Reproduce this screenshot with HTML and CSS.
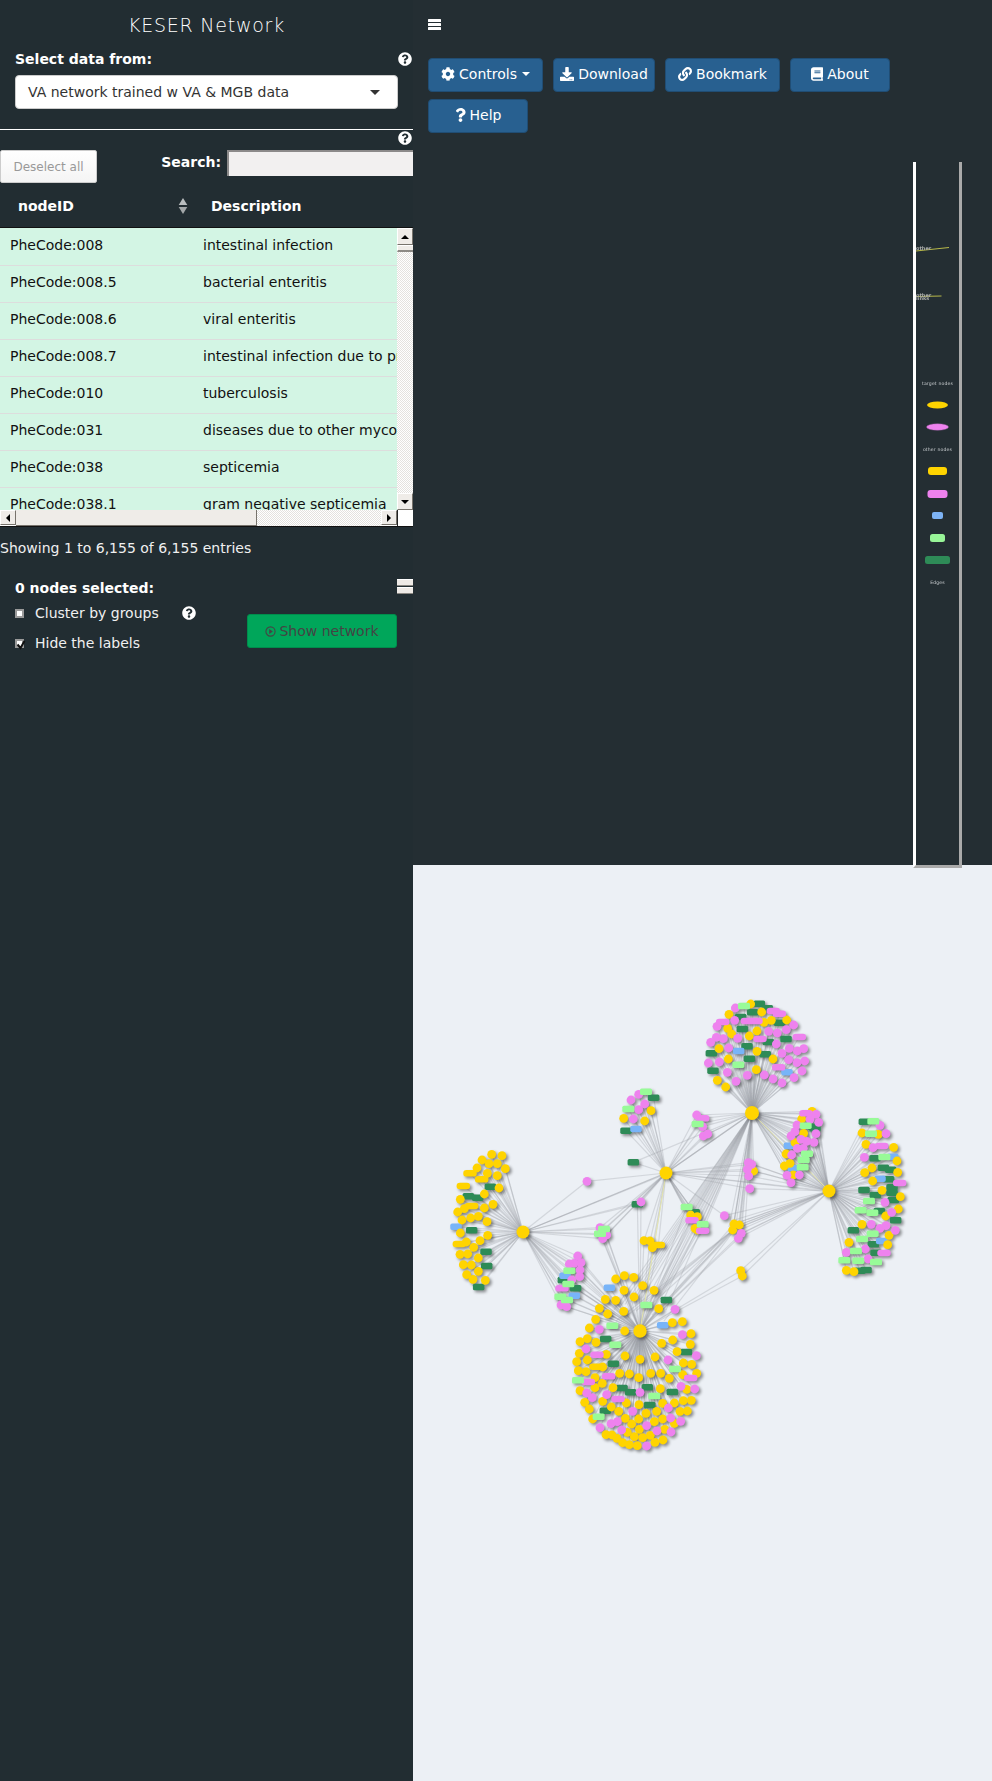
FILE: index.html
```html
<!DOCTYPE html>
<html lang="en">
<head>
<meta charset="utf-8">
<title>KESER Network</title>
<link rel="stylesheet" href="styles.css">
</head>
<body>
<svg class="defs" width="0" height="0" aria-hidden="true">
  <symbol id="i-help" viewBox="0 0 512 512"><path d="M504 256c0 136.997-111.043 248-248 248S8 392.997 8 256C8 119.083 119.043 8 256 8s248 111.083 248 248zM262.655 90c-54.497 0-89.255 22.957-116.549 63.758-3.536 5.286-2.353 12.415 2.715 16.258l34.699 26.31c5.205 3.947 12.621 3.008 16.665-2.122 17.864-22.658 30.113-35.797 57.303-35.797 20.429 0 45.698 13.148 45.698 32.958 0 14.976-12.363 22.667-32.534 33.976C247.128 238.528 216 254.941 216 296v4c0 6.627 5.373 12 12 12h56c6.627 0 12-5.373 12-12v-1.333c0-28.462 83.186-29.647 83.186-106.667 0-58.002-60.165-102-116.531-102zM256 338c-25.365 0-46 20.635-46 46 0 25.364 20.635 46 46 46s46-20.636 46-46c0-25.365-20.635-46-46-46z"/></symbol>
</svg>
<div class="app">
  <aside class="sidebar">
    <h1 class="brand">KESER Network</h1>
    <div class="field-head">
      <label class="label">Select data from:</label>
      <svg class="help"><use href="#i-help"/></svg>
    </div>
    <div class="select">
      <span>VA network trained w VA &amp; MGB data</span>
      <i class="caret"></i>
    </div>
    <hr class="rule">
    <div class="help-row"><svg class="help"><use href="#i-help"/></svg></div>
    <div class="table-tools">
      <button class="deselect">Deselect all</button>
      <div class="search"><label class="label">Search:</label><div class="search-input"></div></div>
    </div>
    <div class="thead">
      <div class="th th-id">nodeID
        <svg class="sort" viewBox="0 0 10 16"><path d="M5 0l4.300 7H.7z" fill="#b9bdbf"/><path d="M5 16l4.300-7H.7z" fill="#a3a7a9"/></svg>
      </div>
      <div class="th">Description</div>
    </div>
    <div class="tbody-wrap">
      <div class="tbody">
        <div class="viewport">
          <table class="rows">
            <tr><td class="c1">PheCode:008</td><td>intestinal infection</td></tr>
            <tr><td class="c1">PheCode:008.5</td><td>bacterial enteritis</td></tr>
            <tr><td class="c1">PheCode:008.6</td><td>viral enteritis</td></tr>
            <tr><td class="c1">PheCode:008.7</td><td>intestinal infection due to protozoa</td></tr>
            <tr><td class="c1">PheCode:010</td><td>tuberculosis</td></tr>
            <tr><td class="c1">PheCode:031</td><td>diseases due to other mycobacteria</td></tr>
            <tr><td class="c1">PheCode:038</td><td>septicemia</td></tr>
            <tr><td class="c1">PheCode:038.1</td><td>gram negative septicemia</td></tr>
          </table>
        </div>
        <div class="vbar">
          <div class="sb-btn"><i class="tri tri-up"></i></div>
          <div class="vthumb"></div>
          <div class="track"></div>
          <div class="sb-btn"><i class="tri tri-down"></i></div>
        </div>
      </div>
      <div class="hbar">
        <div class="sb-btn h"><i class="tri tri-left"></i></div>
        <div class="hthumb"></div>
        <div class="track"></div>
        <div class="sb-btn h"><i class="tri tri-right"></i></div>
        <div class="corner"></div>
      </div>
    </div>
    <p class="info">Showing 1 to 6,155 of 6,155 entries</p>
    <div class="selected-head">
      <span class="label">0 nodes selected:</span>
      <div class="collapse"><i></i><i></i></div>
    </div>
    <div class="options">
      <div class="checks">
        <div class="check"><i class="box"></i><span>Cluster by groups</span><svg class="help help-inline"><use href="#i-help"/></svg></div>
        <div class="check"><i class="box"><svg viewBox="0 0 10 10"><path d="M1.5 4.500l3 3.500 4-7" fill="none" stroke="#111" stroke-width="2"/></svg></i><span>Hide the labels</span></div>
      </div>
      <button class="show">
        <svg class="play" viewBox="0 0 12 12"><circle cx="6" cy="6" r="5" fill="none" stroke="#444" stroke-width="1.2"/><path d="M4.600 3.400L8.600 6 4.600 8.600z" fill="#444"/></svg>
        Show network
      </button>
    </div>
  </aside>
  <main class="main">
    <section class="top">
      <svg class="menu" viewBox="0 0 13 11"><rect width="13" height="3" rx=".5"/><rect y="4" width="13" height="3" rx=".5"/><rect y="8" width="13" height="3" rx=".5"/></svg>
      <div class="toolbar">
        <button class="btn btn-wide"><svg class="ic" viewBox="0 0 512 512"><path d="M487.4 315.7l-42.6-24.6c4.3-23.2 4.3-47 0-70.2l42.6-24.6c4.9-2.8 7.1-8.6 5.5-14-11.1-35.6-30-67.8-54.7-94.6-3.8-4.1-10-5.1-14.8-2.3L380.8 110c-17.9-15.4-38.5-27.3-60.8-35.1V25.8c0-5.6-3.9-10.5-9.4-11.7-36.7-8.2-74.3-7.8-109.2 0-5.5 1.2-9.4 6.1-9.4 11.7V75c-22.2 7.9-42.8 19.8-60.8 35.1L88.7 85.5c-4.9-2.8-11-1.9-14.8 2.3-24.7 26.7-43.6 58.9-54.7 94.6-1.7 5.4.6 11.2 5.5 14L67.3 221c-4.3 23.2-4.3 47 0 70.2l-42.6 24.6c-4.9 2.8-7.1 8.6-5.5 14 11.1 35.6 30 67.8 54.7 94.6 3.8 4.1 10 5.1 14.8 2.3l42.6-24.6c17.9 15.4 38.5 27.3 60.8 35.1v49.2c0 5.6 3.9 10.5 9.4 11.7 36.7 8.2 74.3 7.8 109.2 0 5.5-1.2 9.4-6.1 9.4-11.7v-49.2c22.2-7.9 42.8-19.8 60.8-35.1l42.6 24.6c4.9 2.8 11 1.9 14.8-2.3 24.7-26.7 43.6-58.9 54.7-94.6 1.5-5.5-.7-11.3-5.6-14.1zM256 336c-44.1 0-80-35.9-80-80s35.9-80 80-80 80 35.9 80 80-35.9 80-80 80z"/></svg> Controls <i class="btn-caret"></i></button>
        <button class="btn btn-tight"><svg class="ic" viewBox="0 0 512 512"><path d="M216 0h80c13.3 0 24 10.7 24 24v168h87.7c17.8 0 26.7 21.5 14.1 34.1L269.7 378.3c-7.5 7.5-19.8 7.5-27.3 0L90.1 226.1c-12.6-12.6-3.7-34.1 14.1-34.1H192V24c0-13.3 10.7-24 24-24zm296 376v112c0 13.3-10.7 24-24 24H24c-13.3 0-24-10.7-24-24V376c0-13.3 10.7-24 24-24h146.7l49 49c20.1 20.1 52.5 20.1 72.6 0l49-49H488c13.3 0 24 10.7 24 24zm-124 88c0-11-9-20-20-20s-20 9-20 20 9 20 20 20 20-9 20-20zm64 0c0-11-9-20-20-20s-20 9-20 20 9 20 20 20 20-9 20-20z"/></svg> Download</button>
        <button class="btn btn-wide"><svg class="ic" viewBox="0 0 512 512"><path d="M326.612 185.391c59.747 59.809 58.927 155.698.36 214.59-.11.12-.24.25-.36.37l-67.2 67.2c-59.27 59.27-155.699 59.262-214.96 0-59.27-59.26-59.27-155.7 0-214.96l37.106-37.106c9.84-9.84 26.786-3.3 27.294 10.606.648 17.722 3.826 35.527 9.69 52.721 1.986 5.822.567 12.262-3.783 16.612l-13.087 13.087c-28.026 28.026-28.905 73.66-1.155 101.96 28.024 28.579 74.086 28.749 102.325.51l67.2-67.19c28.191-28.191 28.073-73.757 0-101.83-3.701-3.694-7.429-6.564-10.341-8.569a16.037 16.037 0 0 1-6.947-12.606c-.396-10.567 3.348-21.456 11.698-29.806l21.054-21.055c5.521-5.521 14.182-6.199 20.584-1.731a152.482 152.482 0 0 1 20.522 17.197zM467.547 44.449c-59.261-59.262-155.69-59.27-214.96 0l-67.2 67.2c-.12.12-.25.25-.36.37-58.566 58.892-59.387 154.781.36 214.59a152.454 152.454 0 0 0 20.521 17.196c6.402 4.468 15.064 3.789 20.584-1.731l21.054-21.055c8.35-8.35 12.094-19.239 11.698-29.806a16.037 16.037 0 0 0-6.947-12.606c-2.912-2.005-6.64-4.875-10.341-8.569-28.073-28.073-28.191-73.639 0-101.83l67.2-67.19c28.239-28.239 74.3-28.069 102.325.51 27.75 28.3 26.872 73.934-1.155 101.96l-13.087 13.087c-4.35 4.35-5.769 10.79-3.783 16.612 5.864 17.194 9.042 34.999 9.69 52.721.509 13.906 17.454 20.446 27.294 10.606l37.106-37.106c59.271-59.259 59.271-155.699.001-214.959z"/></svg> Bookmark</button>
        <button class="btn"><svg class="ic ic-book" viewBox="0 0 448 512"><path d="M448 360V24c0-13.3-10.7-24-24-24H96C43 0 0 43 0 96v320c0 53 43 96 96 96h328c13.3 0 24-10.7 24-24v-16c0-7.5-3.5-14.3-8.9-18.7-4.2-15.4-4.2-59.3 0-74.7 5.4-4.3 8.9-11.1 8.9-18.6zM128 134c0-3.3 2.7-6 6-6h212c3.3 0 6 2.7 6 6v20c0 3.3-2.7 6-6 6H134c-3.3 0-6-2.7-6-6v-20zm0 64c0-3.3 2.7-6 6-6h212c3.3 0 6 2.7 6 6v20c0 3.3-2.7 6-6 6H134c-3.3 0-6-2.7-6-6v-20zm253.4 250H96c-17.7 0-32-14.3-32-32 0-17.6 14.4-32 32-32h285.4c-1.9 17.1-1.9 46.9 0 64z"/></svg> About</button>
        <button class="btn"><svg class="ic ic-q" viewBox="0 0 384 512"><path d="M202.021 0C122.202 0 70.503 32.703 29.914 91.026c-7.363 10.58-5.093 25.086 5.178 32.874l43.138 32.709c10.373 7.865 25.132 6.026 33.253-4.148 25.049-31.381 43.63-49.449 82.757-49.449 30.764 0 68.816 19.799 68.816 49.631 0 22.552-18.617 34.134-48.993 51.164-35.423 19.86-82.299 44.576-82.299 106.405V320c0 13.255 10.745 24 24 24h72.471c13.255 0 24-10.745 24-24v-5.773c0-42.86 125.268-44.645 125.268-160.627C377.504 66.256 286.902 0 202.021 0zM192 373.459c-38.196 0-69.271 31.075-69.271 69.271 0 38.195 31.075 69.27 69.271 69.27s69.271-31.075 69.271-69.271-31.075-69.27-69.271-69.27z"/></svg> Help</button>
      </div>
      <div class="legend">
        <svg class="legend-art" viewBox="916 162 43 703" width="43" height="703">
          <line x1="916" y1="251" x2="949" y2="247.5" stroke="#b7b84a" stroke-width="1"/>
          <line x1="916" y1="296.5" x2="941.500" y2="296" stroke="#b7b84a" stroke-width="1"/>
          <text x="916" y="250" class="lg-edge">other</text>
          <text x="916" y="297" class="lg-edge">other</text>
          <text x="916" y="300" class="lg-edge">links</text>
          <text x="937.500" y="384.500" class="lg-text">target nodes</text>
          <ellipse cx="937.500" cy="405" rx="10.500" ry="3.500" fill="#ffd400"/>
          <ellipse cx="937.500" cy="427" rx="11" ry="3.300" fill="#ee82ee" stroke="#9a5da0" stroke-width=".4"/>
          <text x="937.500" y="450.500" class="lg-text">other nodes</text>
          <rect x="928" y="467" width="19" height="8" rx="3" fill="#ffd400"/>
          <rect x="927.500" y="490" width="20" height="8" rx="3" fill="#ee82ee"/>
          <rect x="932" y="512" width="11" height="7" rx="2" fill="#7db3f5"/>
          <rect x="930" y="534" width="15" height="8" rx="2.500" fill="#98f598"/>
          <rect x="925" y="556" width="25" height="8" rx="2.500" fill="#2e8b57"/>
          <text x="937.500" y="584" class="lg-text">Edges</text>
        </svg>
      </div>
    </section>
    <section class="canvas">
      <svg id="network" class="network" viewBox="413 865 579 916" width="579" height="916"></svg>
    </section>
  </main>
</div>
<script src="network.js"></script>
</body>
</html>
```
FILE: styles.css
```css
* { box-sizing: border-box; }
html, body { margin: 0; padding: 0; }
body {
  width: 992px;
  height: 1781px;
  overflow: hidden;
  font-family: "DejaVu Sans", sans-serif;
  font-size: 14px;
  color: #fff;
  background: #222d32;
}
button { font-family: inherit; }
.defs { position: absolute; }
.app { display: flex; width: 992px; height: 1781px; }

/* sidebar */
.sidebar { width: 413px; flex: none; background: #222d32; }
.brand {
  margin: 0;
  padding-top: 13px;
  height: 50px;
  text-align: center;
  font-size: 19px;
  line-height: 24px;
  font-weight: 200;
  letter-spacing: .75px;
  color: #fff;
}
.label { font-weight: 700; color: #fff; }
.field-head {
  display: flex;
  justify-content: space-between;
  align-items: center;
  height: 18px;
  padding: 0 1px 0 15px;
}
.help { width: 14px; height: 14px; fill: #fff; display: block; }
.select {
  display: flex;
  align-items: center;
  justify-content: space-between;
  margin: 7px 15px 0;
  height: 34px;
  padding: 0 17px 0 12px;
  background: #fff;
  border: 1px solid #ccc;
  border-radius: 4px;
  color: #333;
}
.caret {
  width: 0;
  height: 0;
  border-left: 5px solid transparent;
  border-right: 5px solid transparent;
  border-top: 5px solid #333;
}
.rule { margin: 20px 0 0; border: 0; border-top: 1px solid #fff; height: 1px; }
.help-row { display: flex; justify-content: flex-end; padding: 1px 1px 0 0; height: 20px; }
.table-tools { display: flex; justify-content: space-between; height: 33px; }
.deselect {
  width: 97px;
  height: 33px;
  padding: 0;
  font-size: 12px;
  color: #999;
  background: linear-gradient(#fff, #f4f4f4);
  border: 1px solid #ccc;
  border-radius: 2px;
}
.search { display: flex; align-items: flex-start; }
.label + .search-input { margin-left: 6px; }
.search .label { line-height: 24px; }
.search-input {
  width: 186px;
  height: 26px;
  background: #f2f0f0;
  border-top: 2px solid #8c8a8a;
  border-left: 2px solid #8c8a8a;
}
.thead { display: flex; align-items: center; height: 44px; padding-top: 2px; font-weight: 700; }
.th { padding-left: 18px; }
.th-id { width: 193px; display: flex; justify-content: space-between; align-items: center; padding-right: 5px; }
.sort { width: 10px; height: 16px; display: block; }
.tbody-wrap { border-top: 1px solid #111; border-bottom: 1px solid #111; height: 300px; }
.tbody { display: flex; height: 282px; }
.viewport { width: 397px; height: 282px; overflow: hidden; background: #d3f5e4; }
.rows { border-collapse: collapse; table-layout: fixed; width: 640px; color: #111; }
.rows td { height: 37px; padding: 0 0 3px 0; border-bottom: 1px solid #ddd; white-space: nowrap; }
.rows .c1 { width: 203px; padding-left: 10px; }
.vbar { width: 16px; display: flex; flex-direction: column; background: #fff; }
.track {
  flex: 1;
  background: repeating-conic-gradient(#e4e2df 0 25%, #fff 0 50%) 0 0 / 2px 2px;
}
.sb-btn {
  height: 17px;
  flex: none;
  display: flex;
  align-items: center;
  justify-content: center;
  background: #efece8;
  border-right: 1px solid #77736c;
  border-bottom: 1px solid #77736c;
  border-top: 1px solid #fff;
  border-left: 1px solid #fff;
}
.sb-btn.h { width: 16px; height: 15px; }
.vthumb { height: 7px; flex: none; background: #efece8; border-top: 1px solid #fff; border-bottom: 2px solid #8d8a85; border-left: 1px solid #fff; }
.tri { width: 0; height: 0; display: block; border: 3px solid transparent; }
.tri-up { border-top: 0; border-left-width: 4px; border-right-width: 4px; border-bottom: 4px solid #000; }
.tri-down { border-bottom: 0; border-left-width: 4px; border-right-width: 4px; border-top: 4px solid #000; }
.tri-left { border-left: 0; border-top-width: 4px; border-bottom-width: 4px; border-right: 4px solid #000; }
.tri-right { border-right: 0; border-top-width: 4px; border-bottom-width: 4px; border-left: 4px solid #000; }
.hbar { display: flex; height: 16px; background: #fff; }
.hthumb { width: 241px; flex: none; background: #efece8; border-bottom: 1px solid #77736c; border-right: 1px solid #77736c; }
.corner { width: 16px; flex: none; background: #fff; border-left: 1px solid #222; }
.info { margin: 0; padding-top: 11px; height: 47px; line-height: 20px; color: #f0f0f0; }
.selected-head { display: flex; justify-content: space-between; height: 20px; padding-left: 15px; margin-top: 4px; line-height: 20px; }
.collapse { width: 16px; height: 15px; display: flex; flex-direction: column; justify-content: space-between; margin-top: 1px; }
.collapse i { display: block; height: 7px; background: #eeeae6; border-top: 1px solid #fff; border-bottom: 1px solid #8a8782; }
.options { display: flex; justify-content: space-between; padding: 0 16px 0 15px; }
.check { display: flex; align-items: center; height: 30px; color: #f0f0f0; }
.box { width: 9px; height: 9px; flex: none; background: #fff; border: 2px solid #9a9a9a; margin-right: 11px; display: block; overflow: visible; }
.box svg { display: block; width: 10px; height: 10px; margin: -1px 0 0 -1px; }
.help-inline { margin-left: 23px; }
.show {
  width: 150px;
  height: 34px;
  margin-top: 16px;
  padding: 0;
  font-size: 14px;
  color: #444;
  background: #00a65a;
  border: 1px solid #008d4c;
  border-radius: 3px;
  display: flex;
  align-items: center;
  justify-content: center;
  gap: 3px;
}
.play { width: 11px; height: 11px; }

/* main */
.main { flex: 1; min-width: 0; background: #242e33; display: flex; flex-direction: column; }
.top { height: 865px; flex: none; padding: 0 0 0 15px; }
.menu { display: block; width: 13px; height: 11px; fill: #fff; margin: 19px 0 0 0; }
.toolbar { display: flex; flex-wrap: wrap; gap: 7px 10px; margin-top: 28px; }
.btn {
  min-width: 100px;
  height: 34px;
  padding: 0 0 2px;
  display: inline-flex;
  align-items: center;
  justify-content: center;
  gap: 4px;
  font-size: 14px;
  color: #fff;
  background: #286090;
  border: 1px solid #204d74;
  border-radius: 4px;
}
.btn-wide { width: 115px; }
.btn-tight { width: 102px; }
.ic { width: 14px; height: 14px; fill: #fff; }
.ic-book { width: 12px; }
.ic-q { width: 11px; }
.btn-caret { width: 0; height: 0; border-left: 4px solid transparent; border-right: 4px solid transparent; border-top: 4px solid #fff; margin-left: 1px; }
.legend {
  position: relative;
  z-index: 1;
  width: 49px;
  height: 706px;
  margin: 29px 0 0 485px;
  border-left: 3px solid #fff;
  border-right: 3px solid #aaa;
  border-bottom: 3px solid #aaa;
}
.legend-art { display: block; filter: blur(.3px); }
.lg-text { font-size: 4.6px; fill: #c9cdd0; text-anchor: middle; letter-spacing: .15px; font-family: "DejaVu Sans", sans-serif; }
.lg-edge { font-size: 5px; fill: #a9abaa; font-weight: 700; font-family: "DejaVu Sans", sans-serif; }
.canvas { flex: 1; background: #ecf0f5; }
.network { display: block; filter: blur(.35px); }
.edges { stroke: #999da1; stroke-opacity: .3; stroke-width: 1.2; fill: none; }
.edges-pale { stroke: #e8e8a8; stroke-opacity: .9; stroke-width: 1; fill: none; }
.nodes { filter: drop-shadow(2px 2.2px 1.4px rgba(0,0,0,.42)); }
.n-y, .n-Y { fill: #ffd400; }
.n-p, .n-P { fill: #ee82ee; }
.n-g { fill: #98fb98; }
.n-d { fill: #2e8b57; }
.n-b { fill: #78b4f8; }
```
FILE: network.js
```js
// Node positions of the force layout, taken in 3x crops: o is the crop origin.
var TOP = [752, 1113], MID = [666, 1173], RIGHT = [829, 1191], LEFT = [523, 1232], BOT = [640, 1331], LOW = [737, 1227];
var Z6 = [660, 980], Z7 = [540, 1240], Z9 = [430, 1130], Z10 = [780, 1100], Z11 = [580, 1080];

var groups = [
  { o: Z6, h: [TOP],
    y: [272,72,207,103,305,96,334,121,380,120,312,127,203,145,215,162,291,153,268,168,177,206,291,214,205,237,339,237,289,269,172,301,197,321],
    p: [226,84,224,121,171,139,401,135,169,172,190,176,152,187,233,175,326,154,352,159,379,149,349,192,206,204,388,205,366,220,412,213,431,206,386,239,411,248,434,243,145,249,178,246,202,277,228,304,262,286,313,285,339,297,366,309,402,293,426,273],
    P: [188,126,262,123,288,123,340,93,358,101,300,177,418,171,356,262],
    g: [252,78,235,254],
    d: [298,71,322,85,278,97,242,111,358,128,247,147,378,177,325,186,261,199,154,220,316,223,268,236,159,272],
    b: [236,213,381,277] },
  { o: Z6, h: [TOP, MID],
    p: [110,405,128,440,130,468,143,462],
    P: [128,415], g: [113,432] },
  { o: Z6, h: [TOP, RIGHT],
    y: [456,394,425,417,431,460,405,488,378,522,373,558,390,550,400,585],
    p: [468,403,450,418,476,427,411,435,405,455,393,468,468,461,462,487,440,484,423,478,430,505,412,505,395,525,381,586,418,585,393,608],
    P: [438,400],
    g: [437,437,441,521,431,540,428,562],
    d: [460,440,465,445],
    b: [388,497,400,565] },
  { o: Z6, h: [TOP, MID, RIGHT],
    y: [281,573],
    p: [265,548,275,553,262,568,266,588,269,626] },
  { o: Z10, h: [RIGHT],
    y: [246,99,295,103,258,133,341,142,351,183,254,218,276,204,353,217,278,243,306,271,361,290,355,327,317,348,246,373,327,406,207,427,323,434,199,511,222,515],
    p: [300,76,318,101,279,143,253,172,315,307,335,337,274,373,300,385,318,377,346,391,256,447,199,457,264,477],
    P: [305,138,359,249,312,459],
    g: [280,64,273,101,313,171,267,303,242,331,277,338,278,401,246,417,228,453,193,481,235,482,288,486],
    d: [253,65,285,175,310,203,332,209,326,238,252,270,286,285,336,262,336,278,340,300,298,333,347,361,220,391,280,433,288,458,258,510,240,512],
    b: [338,170,300,236,305,423] },
  { o: Z9, h: [LEFT],
    y: [185,73,216,77,156,90,177,101,202,101,226,116,141,114,172,130,202,137,207,174,163,192,91,208,189,223,163,234,83,246,103,236,96,270,122,264,145,259,171,275,91,309,173,316,150,332,131,352,109,336,90,373,113,372,145,384,100,404,124,405,145,424,110,434,129,448,166,451],
    Y: [120,130,100,168,155,148,125,228,88,342],
    d: [181,170,115,199,143,203,125,301,168,365,170,408,146,471],
    b: [78,290] },
  { o: Z9, h: [LEFT, BOT],
    p: [443,378,418,402,453,398,432,400,450,420,425,450,449,440,393,525,410,530],
    P: [396,475],
    g: [418,422,415,462,391,500,411,510],
    d: [400,450,437,475],
    b: [405,437,433,497] },
  { o: Z9, h: [LEFT, MID, BOT],
    p: [510,293,530,315,518,326],
    g: [522,297,510,311] },
  { o: Z11, h: [LEFT, MID], p: [21,304] },
  { o: Z11, h: [MID, TOP], d: [160,247] },
  { o: Z11, h: [MID],
    y: [213,92,131,115,194,123],
    p: [153,60,176,43,194,72,176,89,160,117],
    g: [198,35,145,87],
    d: [221,53,138,152],
    b: [168,147] },
  { o: Z11, h: [LEFT, MID, BOT], d: [172,373], p: [183,366] },
  { o: Z11, h: [MID, RIGHT], p: [433,407] },
  { o: Z11, h: [TOP, MID, BOT],
    y: [332,405,352,410,345,445,352,450],
    P: [336,421,368,452],
    g: [320,381,368,433],
    d: [343,397] },
  { o: Z11, h: [MID, BOT], y: [192,482,210,483,217,503], Y: [235,495] },
  { o: Z11, h: [TOP, RIGHT, BOT],
    y: [462,432,478,435,458,450],
    p: [484,460,475,475] },
  { o: Z11, h: [RIGHT, BOT], y: [482,572,487,588] },
  { o: Z7, h: [BOT],
    y: [227,117,253,107,281,112,308,137,342,151,252,151,282,171,196,178,227,181,356,206,178,205,203,222,251,214,167,238,397,248,427,245,148,264,254,273,142,296,120,305,168,307,453,281,398,300,365,310,451,313,411,335,118,340,199,343,255,348,300,358,345,351,142,360,110,365,430,369,455,373,115,392,138,395,188,381,239,400,268,402,296,413,332,400,362,400,388,415,428,404,470,400,165,413,187,430,165,443,219,443,361,446,120,452,440,448,134,487,188,484,259,489,297,494,368,490,403,489,430,482,454,481,148,507,214,501,236,514,350,514,318,520,420,514,442,513,256,535,296,537,343,545,368,537,158,537,275,552,403,550,298,568,374,568,262,577,198,584,216,585,231,595,283,590,308,593,331,586,248,608,268,614,292,617,345,607,369,600],
    Y: [168,380],
    p: [405,208,178,268,427,284,138,327,469,347,384,360,464,447,423,439,300,457,200,464,140,459,157,473,278,514,385,504,392,534,422,544,320,557,232,545,213,551,180,563,245,570,351,573,393,576,320,618],
    P: [171,344,206,409,452,414,234,477,145,426],
    g: [319,195,217,257,226,314,405,387,114,421,343,468,176,530],
    d: [379,180,197,297,439,336,220,371,246,444,272,457,322,442,397,456,329,495,196,512],
    b: [208,143,368,256] }
];

var SIZE = {
  d: [11.5, 6.5, 1.6], g: [12, 6.5, 1.6], b: [11.5, 6.5, 2],
  P: [13.5, 6.5, 3.2], Y: [13.5, 6.5, 3.2]
};
var ORDER = ["d", "b", "y", "Y", "p", "P", "g"];
var NS = "http://www.w3.org/2000/svg";
var svg = document.getElementById("network");

function el(name, attrs, parent) {
  var e = document.createElementNS(NS, name);
  for (var k in attrs) e.setAttribute(k, attrs[k]);
  parent.appendChild(e);
  return e;
}
function line(p, a, b) {
  el("line", { x1: a[0], y1: a[1], x2: b[0], y2: b[1] }, p);
}

var edges = el("g", { "class": "edges" }, svg);
var pale = el("g", { "class": "edges-pale" }, svg);
var nodes = el("g", { "class": "nodes" }, svg);

groups.forEach(function (g) {
  ORDER.forEach(function (t) {
    var a = g[t];
    if (!a) return;
    for (var i = 0; i < a.length; i += 2) {
      var x = g.o[0] + a[i] / 3, y = g.o[1] + a[i + 1] / 3;
      g.h.forEach(function (h) { line(edges, [x, y], h); });
    }
  });
});

// bundles running between hubs: upper part of the bottom cluster and the hubs
[-26, -20, -15, -10, -6, -2, 2, 6, 10, 15, 20, 26].forEach(function (d) {
  line(edges, TOP, [BOT[0] + d, BOT[1] - 34 + Math.abs(d) / 2]);
});
[-24, -12, -4, 4, 12, 24].forEach(function (d) {
  line(edges, LOW, [BOT[0] + d, BOT[1] - 22 + Math.abs(d) / 2]);
  line(edges, RIGHT, [LOW[0] + d / 4, LOW[1] + d / 4]);
  line(edges, TOP, [LOW[0] + d / 3, LOW[1]]);
});
line(edges, LEFT, MID);
line(edges, LEFT, MID);
line(edges, LEFT, [MID[0], MID[1] + 1]);
line(edges, RIGHT, TOP);
line(edges, MID, TOP);
line(edges, MID, TOP);
line(edges, MID, [TOP[0] - 1, TOP[1] + 1]);
line(edges, MID, BOT);
line(edges, MID, RIGHT);
line(edges, MID, [RIGHT[0], RIGHT[1] + 1]);
line(pale, MID, BOT);
line(pale, TOP, RIGHT);

groups.forEach(function (g) {
  ORDER.forEach(function (t) {
    var a = g[t];
    if (!a) return;
    for (var i = 0; i < a.length; i += 2) {
      var x = g.o[0] + a[i] / 3, y = g.o[1] + a[i + 1] / 3;
      if (t === "y" || t === "p") {
        el("circle", { "class": "n-" + t, cx: x, cy: y, r: 4.4 }, nodes);
      } else {
        var s = SIZE[t];
        el("rect", { "class": "n-" + t, x: x - s[0] / 2, y: y - s[1] / 2, width: s[0], height: s[1], rx: s[2] }, nodes);
      }
    }
  });
});
[[TOP, 7], [MID, 6.5], [RIGHT, 6.5], [LEFT, 6.5], [BOT, 6.7]].forEach(function (h) {
  el("circle", { "class": "n-y", cx: h[0][0], cy: h[0][1], r: h[1] }, nodes);
});
```
